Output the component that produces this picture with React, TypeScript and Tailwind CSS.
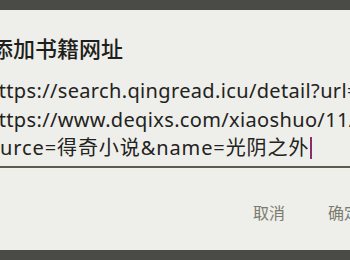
const FONT = "font-['Noto_Sans','Noto_Sans_CJK_SC',sans-serif]";

const LINES = [
    "https://search.qingread.icu/detail?url=",
    "https://www.deqixs.com/xiaoshuo/11/&so",
];

export default function App() {
    return (
        <div className={`flex h-[260px] w-[350px] flex-col overflow-hidden bg-[#4a4a47] ${FONT}`}>
            {/* status strip */}
            <div className="h-[10px] shrink-0" />

            {/* dialog */}
            <div className="flex h-[240px] shrink-0 flex-col overflow-hidden bg-[#eeeeea]">
                <div className="ml-[-9px] mt-[23px] whitespace-nowrap text-[22px] leading-[30px] font-medium text-[#1e1e1c]">
                    添加书籍网址
                </div>

                {/* url field */}
                <div className="mt-[14px] text-[20px] leading-[28.5px] tracking-[0.35px] text-[#222220]">
                    {LINES.map((line) => (
                        <div key={line} className="ml-[-14px] whitespace-nowrap">
                            {line}
                        </div>
                    ))}
                    <div className="ml-[-13px] flex items-center whitespace-nowrap tracking-[0.9px]">
                        <span>ource=得奇小说&amp;name=光阴之外</span>
                        <span className="ml-[1px] h-[22px] w-[2px] bg-[#8b2c6c]" />
                    </div>
                </div>
                <div className="mt-[3px] h-[2px] bg-[#5b5b50]" />
                <div className="h-[1px] bg-[#f4f4e4]" />

                {/* actions */}
                <div className="mt-[34px] flex whitespace-nowrap text-[16px] leading-[20px] text-[#7b7b6f]">
                    <span className="ml-[253px]">取消</span>
                    <span className="ml-[43px]">确定</span>
                </div>
            </div>

            <div className="flex-1" />
        </div>
    );
}
